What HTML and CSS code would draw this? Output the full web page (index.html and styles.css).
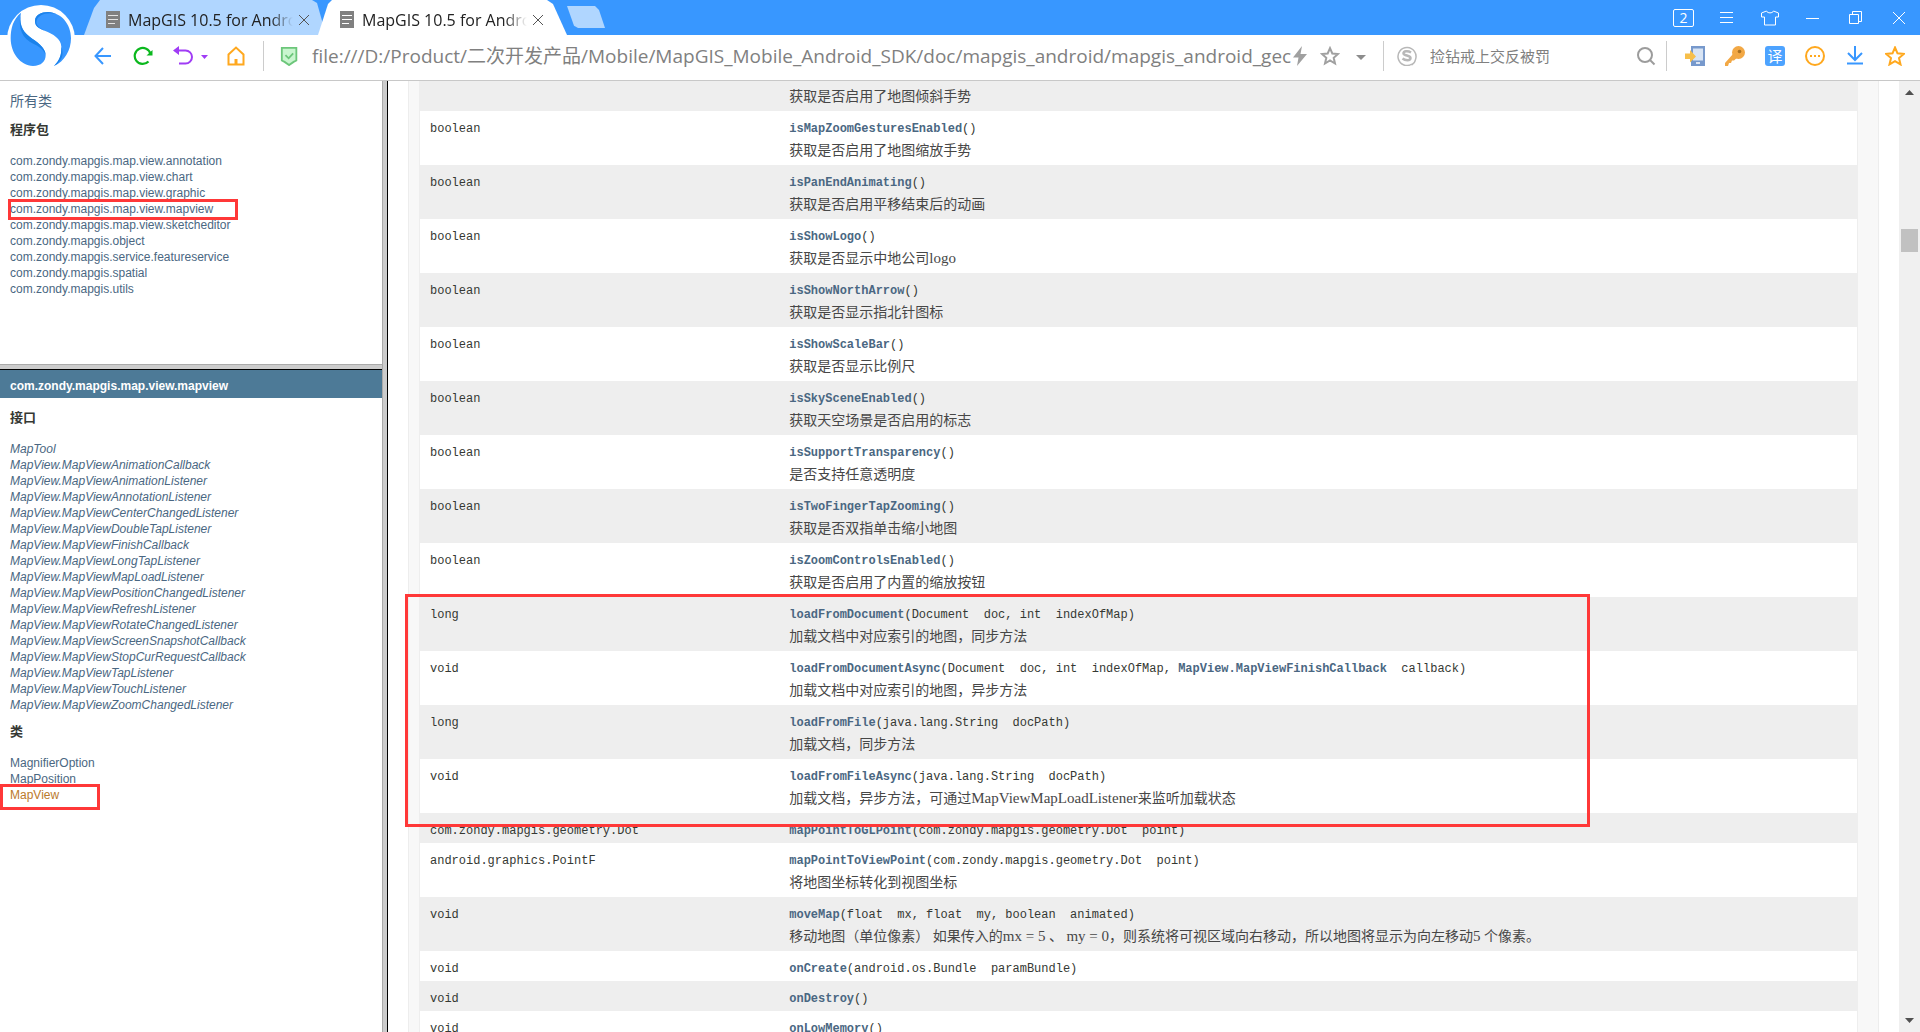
FILE: index.html
```html
<!DOCTYPE html>
<html lang="zh-CN">
<head>
<meta charset="utf-8">
<title>MapGIS 10.5 for Android</title>
<link rel="stylesheet" href="styles.css">
</head>
<body>
<header class="chrome">
  <svg class="logo" viewBox="0 0 204 186" aria-hidden="true">
    <circle cx="102" cy="102" r="102" fill="#fff"/>
    <path d="M42 23C18 43 11 70 11 100C11 145 40 182 78 183C103 182 116 170 116 150C115 125 88 110 68 95C43 77 36 50 42 23Z" fill="#3897ff"/>
    <path d="M84 47C84 30 103 21 123 21C163 23 192 57 192 100C192 135 173 170 141 183C158 165 164 150 163 125C162 100 138 87 113 77C93 69 84 63 84 47Z" fill="#3897ff"/>
    <path d="M84 47C84 30 103 21 123 21C133 22 142 24 149 28C125 20 90 26 88 52C90 64 96 68 113 77C93 69 84 63 84 47ZM42 23C36 50 43 77 68 95C88 110 115 125 116 150C108 128 90 122 68 110C38 90 34 55 42 23ZM163 125C164 150 158 165 141 183C165 168 172 148 163 125Z" fill="#1b82ea"/>
  </svg>
  <div class="titlebar">
    <div class="tab tab-back">
      <svg class="doc" viewBox="0 0 14 17"><path d="M0 0h14v17H0z" fill="#808080"/><path d="M2 4.500h10M2 8.500h10M2 12.500h7" stroke="#e4e4e4"/></svg>
      <span class="tab-title">MapGIS 10.5 for Andro</span>
      <button class="tab-close" aria-label="关闭"><svg viewBox="0 0 12 12"><path d="M1 1l10 10M11 1L1 11" stroke="#555" fill="none"/></svg></button>
    </div>
    <div class="tab tab-front">
      <svg class="doc" viewBox="0 0 14 17"><path d="M0 0h14v17H0z" fill="#808080"/><path d="M2 4.500h10M2 8.500h10M2 12.500h7" stroke="#fff"/></svg>
      <span class="tab-title">MapGIS 10.5 for Andro</span>
      <button class="tab-close" aria-label="关闭"><svg viewBox="0 0 12 12"><path d="M1 1l10 10M11 1L1 11" stroke="#555" fill="none"/></svg></button>
    </div>
    <button class="tab-new" aria-label="新标签"></button>
    <div class="window-buttons">
      <button class="win"><span class="count">2</span></button>
      <button class="win" aria-label="菜单"><svg viewBox="0 0 20 20"><path d="M3 4.500h13M3 9.500h13M3 14.500h13"/></svg></button>
      <button class="win" aria-label="皮肤"><svg viewBox="0 0 20 20"><path d="M6.500 3L1.500 5v4h3v8h11V9h3V5l-5-2c-1 2.500-6 2.500-7 0z"/></svg></button>
      <button class="win" aria-label="最小化"><svg viewBox="0 0 20 20"><path d="M3 10.500h13"/></svg></button>
      <button class="win" aria-label="还原"><svg viewBox="0 0 20 20"><path d="M3.500 6.500h9v9h-9zM6.500 6V3.500h9V13.500H13"/></svg></button>
      <button class="win" aria-label="关闭窗口"><svg viewBox="0 0 20 20"><path d="M4 4l12 12M16 4L4 16"/></svg></button>
    </div>
  </div>
  <div class="toolbar">
    <button class="tool" aria-label="后退"><svg viewBox="0 0 20 20" fill="none" stroke="#3897ff" stroke-width="2"><path d="M18 10H3M10 2L2.500 10l7.500 8"/></svg></button>
    <button class="tool" aria-label="刷新"><svg viewBox="0 0 20 20" fill="none" stroke="#0bb81e" stroke-width="2.200"><path d="M15.500 15.500A8 8 0 1 1 17.500 8"/><path d="M19.500 4v5.500h-6z" fill="#0bb81e" stroke="none"/></svg></button>
    <button class="tool undo" aria-label="恢复"><svg viewBox="0 0 36 20" fill="none" stroke="#a03cf5" stroke-width="2"><path d="M4 4.500h9.500a6.200 6.200 0 0 1 0 13H7"/><path d="M7 0v9L1 4.500zM29 9h7l-3.500 4z" fill="#a03cf5" stroke="none"/></svg></button>
    <button class="tool" aria-label="主页"><svg viewBox="0 0 20 20" fill="none" stroke="#ffa81e" stroke-width="2"><path d="M2.500 18.500V8.500L10 1.500l7.500 7v10z"/><path d="M10 13v5" stroke-width="3"/></svg></button>
    <i class="rule rule-left"></i>
    <button class="tool" aria-label="安全"><svg viewBox="0 0 20 22" fill="#c9f5cf" stroke="#6cc67a" stroke-width="2"><path d="M2 2h16v14l-3 1.500-5 3.500-5-3.500L2 16z"/><path d="M6 10l3.500 3.500L14.500 8" fill="none"/></svg></button>
    <input class="url" type="text" aria-label="地址" value="file:///D:/Product/二次开发产品/Mobile/MapGIS_Mobile_Android_SDK/doc/mapgis_android/mapgis_android_gec">
    <button class="tool small" aria-label="极速"><svg viewBox="0 0 20 20" fill="#a0a0a0"><path d="M12 0L3 11.500h5.500L7 20 17 8h-6.500z"/></svg></button>
    <button class="tool small" aria-label="收藏"><svg viewBox="0 0 20 20" fill="none" stroke="#a0a0a0" stroke-width="2"><path d="M10 2.200l2.300 5.300 5.700.5-4.300 3.800 1.300 5.700-5-3-5 3 1.300-5.700L2 8l5.700-.5z"/></svg></button>
    <button class="tool small" aria-label="展开"><svg viewBox="0 0 20 20" fill="#8c8c8c"><path d="M6 9h10l-5 5z"/></svg></button>
    <i class="rule rule-mid"></i>
    <form class="search">
      <svg class="sogou" viewBox="0 0 20 20"><path d="M15 18A9 9 0 1 1 18.500 13.500Q18 17 14.500 19" fill="none" stroke="#b8b8b8" stroke-width="1.500"/><path d="M14 6.500C11 4.500 6 5 6.500 7.500S13.500 9 13.500 12 8 14.500 5.500 12.500" fill="none" stroke="#b8b8b8" stroke-width="2.500"/></svg>
      <input class="query" type="text" aria-label="搜索" placeholder="捡钻戒上交反被罚">
      <button class="tool" type="button" aria-label="搜索"><svg viewBox="0 0 20 20" fill="none" stroke="#9c9c9c" stroke-width="2"><circle cx="9" cy="9" r="7"/><path d="M14 14l4.500 4.500"/></svg></button>
    </form>
    <i class="rule"></i>
    <div class="extras">
      <button class="tool" aria-label="手机"><svg viewBox="0 0 20 20"><path d="M6 0h14v20H6z" fill="#7799cc"/><path d="M8 2.500h10v12H8z" fill="#d8e4f4"/><path d="M11 17h4" stroke="#fff" stroke-width="1.500"/><path d="M0 7.500h5V4l6 6.500-6 6V13H0z" fill="#f7bf4a"/></svg></button>
      <button class="tool" aria-label="密码"><svg viewBox="0 0 20 20"><circle cx="13.500" cy="6.500" r="6.500" fill="#f2a845"/><path d="M8 8L0 17v3h3l1-3h2l1-2.500h2L13 11z" fill="#f2a845"/><circle cx="14.500" cy="5.500" r="1.800" fill="#a87021"/></svg></button>
      <button class="tool" aria-label="翻译"><span class="translate">译</span></button>
      <button class="tool" aria-label="更多"><svg viewBox="0 0 20 20"><circle cx="10" cy="10" r="9" fill="none" stroke="#ffa81e" stroke-width="2"/><path d="M5 9h2v2H5zM9 9h2v2H9zM13 9h2v2h-2z" fill="#ffa81e"/></svg></button>
      <button class="tool" aria-label="下载"><svg viewBox="0 0 20 20" fill="none" stroke="#3897ff" stroke-width="2"><path d="M2 17.500h16M10 0v13.500M3 7l7 7 7-7"/></svg></button>
      <button class="tool" aria-label="收藏夹"><svg viewBox="0 0 20 20" fill="none" stroke="#ffa81e" stroke-width="2"><path d="M10 1.500l2.500 5.800 6.300.6-4.800 4.200 1.500 6.300-5.500-3.300-5.500 3.300L6 12.100 1.200 7.900l6.300-.6z"/></svg></button>
    </div>
  </div>
</header>

<main class="frames">
  <div class="side">
    <nav class="packages">
      <a class="all" href="#">所有类</a>
      <h2>程序包</h2>
      <ul>
        <li><a href="#">com.zondy.mapgis.map.view.annotation</a></li>
        <li><a href="#">com.zondy.mapgis.map.view.chart</a></li>
        <li><a href="#">com.zondy.mapgis.map.view.graphic</a></li>
        <li class="marked"><a href="#">com.zondy.mapgis.map.view.mapview</a></li>
        <li><a href="#">com.zondy.mapgis.map.view.sketcheditor</a></li>
        <li><a href="#">com.zondy.mapgis.object</a></li>
        <li><a href="#">com.zondy.mapgis.service.featureservice</a></li>
        <li><a href="#">com.zondy.mapgis.spatial</a></li>
        <li><a href="#">com.zondy.mapgis.utils</a></li>
      </ul>
    </nav>
    <nav class="classes">
      <h1><a href="#">com.zondy.mapgis.map.view.mapview</a></h1>
      <h2>接口</h2>
      <ul class="interfaces">
        <li><a href="#">MapTool</a></li>
        <li><a href="#">MapView.MapViewAnimationCallback</a></li>
        <li><a href="#">MapView.MapViewAnimationListener</a></li>
        <li><a href="#">MapView.MapViewAnnotationListener</a></li>
        <li><a href="#">MapView.MapViewCenterChangedListener</a></li>
        <li><a href="#">MapView.MapViewDoubleTapListener</a></li>
        <li><a href="#">MapView.MapViewFinishCallback</a></li>
        <li><a href="#">MapView.MapViewLongTapListener</a></li>
        <li><a href="#">MapView.MapViewMapLoadListener</a></li>
        <li><a href="#">MapView.MapViewPositionChangedListener</a></li>
        <li><a href="#">MapView.MapViewRefreshListener</a></li>
        <li><a href="#">MapView.MapViewRotateChangedListener</a></li>
        <li><a href="#">MapView.MapViewScreenSnapshotCallback</a></li>
        <li><a href="#">MapView.MapViewStopCurRequestCallback</a></li>
        <li><a href="#">MapView.MapViewTapListener</a></li>
        <li><a href="#">MapView.MapViewTouchListener</a></li>
        <li><a href="#">MapView.MapViewZoomChangedListener</a></li>
      </ul>
      <h2>类</h2>
      <ul>
        <li><a href="#">MagnifierOption</a></li>
        <li><a href="#">MapPosition</a></li>
        <li class="marked current"><a href="#">MapView</a></li>
      </ul>
    </nav>
  </div>
  <div class="splitter"></div>
  <div class="detail">
    <div class="summary">
      <table>
        <tbody>
          <tr class="partial"><td></td><td><p>获取是否启用了地图倾斜手势</p></td></tr>
          <tr><td><code>boolean</code></td><td><code><a href="#">isMapZoomGesturesEnabled</a>()</code><p>获取是否启用了地图缩放手势</p></td></tr>
          <tr><td><code>boolean</code></td><td><code><a href="#">isPanEndAnimating</a>()</code><p>获取是否启用平移结束后的动画</p></td></tr>
          <tr><td><code>boolean</code></td><td><code><a href="#">isShowLogo</a>()</code><p>获取是否显示中地公司<span class="latin">logo</span></p></td></tr>
          <tr><td><code>boolean</code></td><td><code><a href="#">isShowNorthArrow</a>()</code><p>获取是否显示指北针图标</p></td></tr>
          <tr><td><code>boolean</code></td><td><code><a href="#">isShowScaleBar</a>()</code><p>获取是否显示比例尺</p></td></tr>
          <tr><td><code>boolean</code></td><td><code><a href="#">isSkySceneEnabled</a>()</code><p>获取天空场景是否启用的标志</p></td></tr>
          <tr><td><code>boolean</code></td><td><code><a href="#">isSupportTransparency</a>()</code><p>是否支持任意透明度</p></td></tr>
          <tr><td><code>boolean</code></td><td><code><a href="#">isTwoFingerTapZooming</a>()</code><p>获取是否双指单击缩小地图</p></td></tr>
          <tr><td><code>boolean</code></td><td><code><a href="#">isZoomControlsEnabled</a>()</code><p>获取是否启用了内置的缩放按钮</p></td></tr>
          <tr><td><code>long</code></td><td><code><a href="#">loadFromDocument</a>(Document&nbsp;&nbsp;doc, int&nbsp;&nbsp;indexOfMap)</code><p>加载文档中对应索引的地图，同步方法</p></td></tr>
          <tr><td><code>void</code></td><td><code><a href="#">loadFromDocumentAsync</a>(Document&nbsp;&nbsp;doc, int&nbsp;&nbsp;indexOfMap, <a href="#">MapView.MapViewFinishCallback</a>&nbsp;&nbsp;callback)</code><p>加载文档中对应索引的地图，异步方法</p></td></tr>
          <tr><td><code>long</code></td><td><code><a href="#">loadFromFile</a>(java.lang.String&nbsp;&nbsp;docPath)</code><p>加载文档，同步方法</p></td></tr>
          <tr><td><code>void</code></td><td><code><a href="#">loadFromFileAsync</a>(java.lang.String&nbsp;&nbsp;docPath)</code><p>加载文档，异步方法，可通过<span class="latin">MapViewMapLoadListener</span>来监听加载状态</p></td></tr>
          <tr><td><code>com.zondy.mapgis.geometry.Dot</code></td><td><code><a href="#">mapPointToGLPoint</a>(com.zondy.mapgis.geometry.Dot&nbsp;&nbsp;point)</code></td></tr>
          <tr><td><code>android.graphics.PointF</code></td><td><code><a href="#">mapPointToViewPoint</a>(com.zondy.mapgis.geometry.Dot&nbsp;&nbsp;point)</code><p>将地图坐标转化到视图坐标</p></td></tr>
          <tr><td><code>void</code></td><td><code><a href="#">moveMap</a>(float&nbsp;&nbsp;mx, float&nbsp;&nbsp;my, boolean&nbsp;&nbsp;animated)</code><p>移动地图（单位像素） 如果传入的<span class="latin">mx = 5</span> 、 <span class="latin">my = 0</span>，则系统将可视区域向右移动，所以地图将显示为向左移动<span class="latin">5</span> 个像素。</p></td></tr>
          <tr><td><code>void</code></td><td><code><a href="#">onCreate</a>(android.os.Bundle&nbsp;&nbsp;paramBundle)</code></td></tr>
          <tr><td><code>void</code></td><td><code><a href="#">onDestroy</a>()</code></td></tr>
          <tr><td><code>void</code></td><td><code><a href="#">onLowMemory</a>()</code></td></tr>
        </tbody>
      </table>
      <div class="highlight"></div>
    </div>
  </div>
  <div class="scrollbar">
    <svg viewBox="0 0 9 5"><path d="M0 5L4.500 0 9 5z"/></svg>
    <div class="thumb"></div>
    <svg viewBox="0 0 9 5"><path d="M0 0h9L4.500 5z"/></svg>
  </div>
</main>
</body>
</html>
```
FILE: styles.css
```css
*, *::before, *::after { box-sizing: border-box; }

body {
  margin: 0;
  height: 100vh;
  display: flex;
  flex-direction: column;
  overflow: hidden;
  background: #fff;
  color: #353833;
  font-family: "Liberation Sans", "Noto Sans CJK SC", sans-serif;
  font-size: 12px;
}

a { color: #4a6782; text-decoration: none; }
ul { margin: 0; padding: 0; list-style: none; }
button { padding: 0; border: 0; background: none; font: inherit; }

/* Browser chrome */
.chrome {
  position: relative;
  flex: none;
  border-bottom: 1px solid #c8c8c8;
}
.logo {
  position: absolute;
  left: 7px;
  top: 5px;
  width: 68px;
  height: 62px;
}
.titlebar {
  display: flex;
  height: 35px;
  padding-left: 84px;
  background: #3897ff;
}
.tab {
  display: flex;
  align-items: center;
  height: 35px;
  padding: 4px 0 0 22px;
}
.tab-back {
  width: 242px;
  background: #b0d6ff;
  clip-path: polygon(0 100%, 10px 8px, 16px 0, 228px 0, 233px 3px, 100% 100%);
}
.tab-front {
  width: 249px;
  margin-left: -8px;
  background: #fff;
  clip-path: polygon(0 100%, 10px 4px, 14px 0, 229px 0, 235px 4px, 100% 100%);
}
.doc { flex: none; width: 14px; height: 17px; }
.tab-title {
  flex: none;
  width: 170px;
  margin-left: 8px;
  white-space: nowrap;
  font: 16px/24px "Open Sans", "Noto Sans CJK SC", sans-serif;
  color: #222;
  mask-image: linear-gradient(to right, #000 84%, transparent 97%);
}
.tab-close { width: 12px; height: 12px; }
.tab-close svg { display: block; }
.tab-new {
  width: 38px;
  height: 22px;
  margin-top: 6px;
  background: #b0d6ff;
  clip-path: polygon(0 0, 28px 0, 32px 4px, 100% 100%, 11px 100%, 7px 90%);
}
.window-buttons { display: flex; margin-left: auto; }
.win { display: grid; place-items: center; width: 43px; height: 35px; }
.win svg { width: 20px; height: 20px; fill: none; stroke: #fff; }
.count {
  width: 21px;
  height: 18px;
  border: 1px solid #fff;
  border-radius: 2px;
  color: #fff;
  font: 14px/16px "Open Sans", sans-serif;
}

.toolbar {
  display: flex;
  align-items: center;
  height: 45px;
  padding: 0 5px 3px 83px;
}
.tool { display: grid; flex: none; place-items: center; width: 40px; height: 40px; }
.tool svg { height: 20px; }
.undo { width: 53px; }
.small { width: 30px; }
.rule { flex: none; width: 1px; height: 30px; background: #ccc; }
.rule-left { margin: 0 5px 0 7px; }
.rule-mid { margin-left: 8px; }
.url {
  flex: 1;
  min-width: 0;
  margin: 0 -8px 0 3px;
  padding: 0;
  border: 0;
  outline: 0;
  background: none;
  color: #808080;
  font: 19px/28px "Open Sans", "Noto Sans CJK SC", sans-serif;
}
.search { display: flex; align-items: center; width: 282px; padding-left: 13px; }
.sogou { flex: none; width: 20px; height: 20px; }
.query {
  flex: 1;
  min-width: 0;
  margin-left: 13px;
  padding: 0;
  border: 0;
  outline: 0;
  font: 15px/24px "Noto Sans CJK SC", sans-serif;
}
.query::placeholder { color: #808080; }
.extras { display: flex; margin-left: 8px; }
.translate {
  width: 20px;
  height: 20px;
  border-radius: 3px;
  background: #4da3ff;
  color: #fff;
  font: 15px/20px "Noto Sans CJK SC", sans-serif;
}

/* Documentation frames */
.frames { display: flex; flex: 1; min-height: 0; }
.side { display: flex; flex: none; flex-direction: column; width: 382px; }
.packages {
  flex: none;
  height: 283px;
  padding: 8px 10px 0;
}
.all { display: block; font-size: 14px; line-height: 24px; }
.side h2 { margin: 0; font-size: 13px; line-height: 20px; }
.packages h2 { margin: 7px 0 13px; }
.side li { position: relative; line-height: 16px; }
.classes {
  flex: 1;
  min-height: 0;
  border-top: 1px solid #aaa;
}
.classes::before {
  content: "";
  display: block;
  height: 5px;
  background: #ccc;
  border-bottom: 1px solid #000;
}
.classes h1 {
  margin: 0 0 10px;
  padding: 4px 10px 0;
  background: #4d7a97;
  font-size: 12px;
  line-height: 24px;
}
.classes h1 a { color: #fff; }
.classes h2 { padding: 0 10px; }
.classes ul { margin: 13px 0 9px; padding: 0 10px; }
.interfaces { font-style: italic; }
.current a { color: #bb7a2a; }
.marked::after {
  content: "";
  position: absolute;
  border: 3px solid #ff3838;
  left: -2px;
  top: -2px;
  width: 230px;
  height: 21px;
}
.current::after { left: -10px; top: -3px; width: 100px; height: 26px; }

.splitter {
  flex: none;
  width: 6px;
  border-left: 1px solid #aaa;
  border-right: 1px solid #000;
  background: #ccc;
}

.detail { flex: 1; min-width: 0; padding: 0 20px; }
.summary {
  position: relative;
  padding: 0 20px 0 10px;
  border: solid #ededed;
  border-width: 0 1px;
  background: #f8f8f8;
}
table {
  width: 100%;
  table-layout: fixed;
  border-collapse: separate;
  border-spacing: 0;
  border: solid #eee;
  border-width: 0 1px;
  background: #fff;
}
tr:nth-child(odd) { background: #eee; }
td { padding: 9px 10px 2px; vertical-align: top; }
td:first-child { width: 25%; }
.partial td { padding-top: 4px; }
code {
  display: block;
  font: 12px/19px "Liberation Mono", monospace;
  white-space: nowrap;
}
code a { font-weight: bold; }
td p {
  margin: 0;
  color: #474747;
  font: 14px/24px "Liberation Serif", "Noto Sans CJK SC", serif;
}
.latin { font-size: 15px; line-height: 1; }
.highlight {
  position: absolute;
  left: -4px;
  top: 513px;
  width: 1185px;
  height: 233px;
  border: 3px solid #ff3838;
}

.scrollbar {
  display: flex;
  flex: none;
  flex-direction: column;
  align-items: center;
  width: 21px;
  padding: 9px 0;
  background: #f0f0f0;
}
.scrollbar svg { width: 9px; height: 5px; fill: #505050; }
.scrollbar svg:last-child { margin-top: auto; }
.thumb { width: 17px; height: 23px; margin-top: 134px; background: #c1c1c1; }
```
